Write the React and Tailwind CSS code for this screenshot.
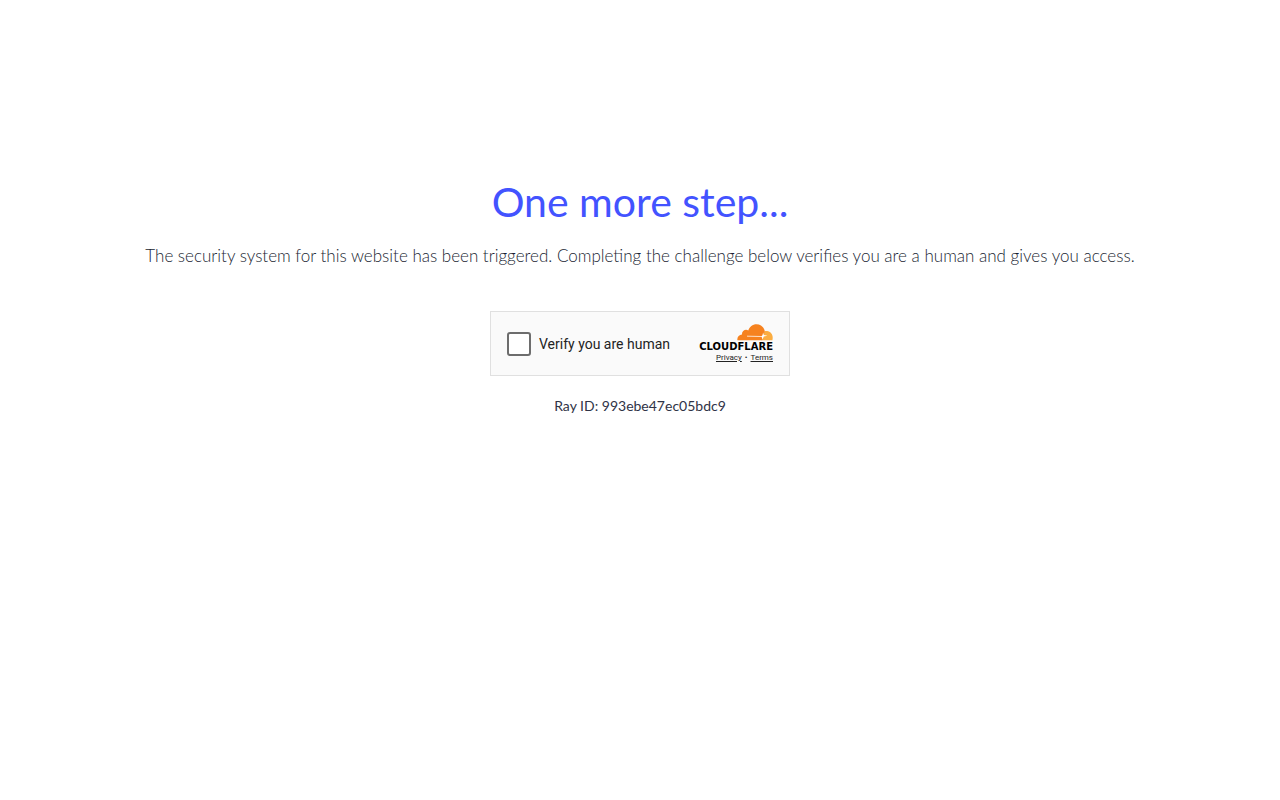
function CloudIcon() {
  return (
    <svg viewBox="0 0 36 17" className="h-[17px] w-9" aria-hidden="true">
      <path
        fill="#fbad41"
        d="M27.400 7.400c.8-.3 1.700-.4 2.700-.3 3.200.3 5.600 3.200 5.600 6.500 0 1-.1 1.900-.3 2.600H24.500l1-3.600z"
      />
      <path
        fill="#f6821f"
        d="M.4 16.200C-.1 13.300 2 10.700 5 10.500 4.500 7.300 8.500 4.500 11.300 6.600 12.400 2.900 15.600.2 19.500.2c4.200 0 7.600 3 8.300 7.100L26.600 11l-1.500 5.200z"
      />
      <path
        fill="#fff"
        d="M10 11.700l14.600.2c.7-.1 1.100-1.200 1.500-3.400l.8 2.500 3.500.7-3.600.9-1.300 2.800-.9-2.700L10 12.400z"
      />
    </svg>
  );
}

export default function App() {
  return (
    <main className="flex min-h-screen flex-col items-center bg-white px-6 pt-[178px] text-center font-['Lato',sans-serif] text-[#2f3346]">
      <h1 className="text-[41px] leading-12 font-normal text-[#4353ff]">One more step...</h1>
      <p className="mt-4 text-[17px] leading-7 font-light text-[#1b1f33]">
        The security system for this website has been triggered. Completing the challenge below verifies you are a human and gives you access.
      </p>
      <section
        aria-label="Human verification"
        className="mt-[41px] flex w-full max-w-[300px] items-center justify-between border border-[#e0e0e0] bg-[#fafafa] px-4 py-3 font-['Roboto',sans-serif] text-[#232323]"
      >
        <label className="flex items-center gap-2 text-sm leading-5">
          <input
            type="checkbox"
            className="size-6 shrink-0 appearance-none rounded-[3px] border-2 border-[#6d6d6d] bg-white checked:bg-[#c44d0e]"
          />
          Verify you are human
        </label>
        <div className="flex flex-col items-end">
          <CloudIcon />
          <span className="font-['DejaVu_Sans',sans-serif] text-[10px] leading-3 font-bold text-black">CLOUDFLARE</span>
          <div className="flex items-center gap-[3px] text-[8px] leading-[10px]">
            <a href="#privacy" className="underline">Privacy</a>
            <span>•</span>
            <a href="#terms" className="underline">Terms</a>
          </div>
        </div>
      </section>
      <p className="mt-[18px] text-sm leading-6">Ray ID: 993ebe47ec05bdc9</p>
    </main>
  );
}
